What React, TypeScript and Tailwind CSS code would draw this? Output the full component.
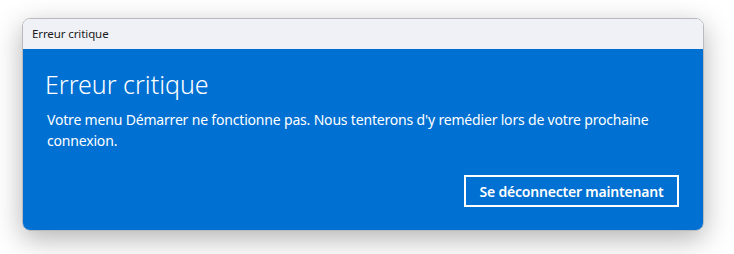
const App = () => {
  return (
    <div
      className="w-[734px] h-[254px] bg-white pt-[18px] pl-[22px]"
      style={{ fontFamily: '"Noto Sans", "Open Sans", sans-serif' }}
    >
      <div className="w-[682px] h-[213px] flex flex-col rounded-[8px] border border-[#b9b9be] overflow-hidden shadow-[0_8px_28px_rgba(0,0,0,0.3)]">
        <div className="h-[30px] shrink-0 bg-[#f0f1f6] flex items-center pl-[9px] text-[11.5px] tracking-[-0.1px] text-[#1a1a1a]">
          Erreur critique
        </div>
        <div className="flex-1 bg-[#0070d2] text-white flex flex-col pt-[19px] pl-[22px] pr-[24px] pb-[23px]">
          <h1 className="text-[25px] font-light leading-[33px]">Erreur critique</h1>
          <p className="mt-[8px] pl-[2px] text-[14px] leading-[21px] tracking-[-0.18px]">
            Votre menu Démarrer ne fonctionne pas. Nous tenterons d'y remédier lors de votre prochaine
            connexion.
          </p>
          <div className="mt-auto flex justify-end">
            <button className="h-[32px] w-[215px] border-2 border-white text-[14px] font-semibold tracking-[-0.2px]">
              Se déconnecter maintenant
            </button>
          </div>
        </div>
      </div>
    </div>
  );
};

export default App;
